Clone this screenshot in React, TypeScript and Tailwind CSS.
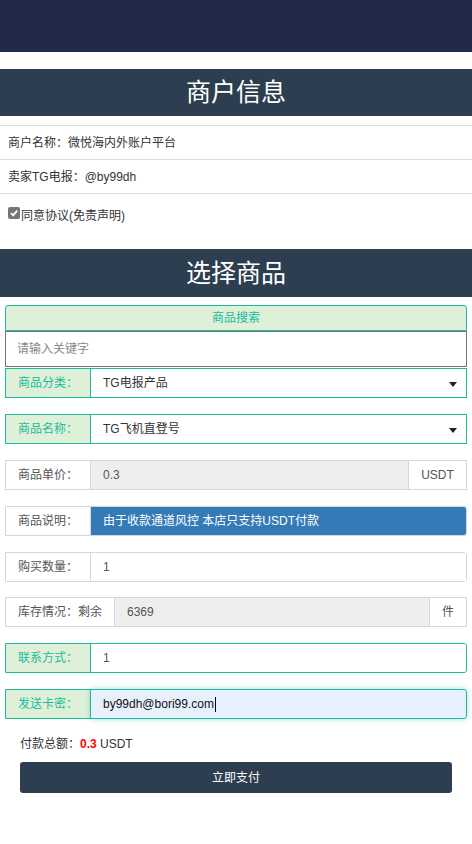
import React from "react";

const font = { fontFamily: '"Liberation Sans", "Noto Sans CJK SC", sans-serif' };

function Caret() {
  return (
    <svg width="8" height="5" viewBox="0 0 8 5" className="absolute right-[9px] top-[13px]">
      <path d="M0 0 L8 0 L4 5 Z" fill="#222" />
    </svg>
  );
}

export default function App() {
  return (
    <div className="w-[472px] min-h-[844px] bg-white text-[12px] text-[#333]" style={font}>
      <div className="h-[52px] bg-[#212a4a]" />
      <div className="mt-[17px] h-[47px] bg-[#2c3e50] flex items-center justify-center text-white text-[25px] leading-none">
        商户信息
      </div>
      <div className="mt-[9px]">
        <div className="h-[34px] border-t border-[#ddd] flex items-center px-[8px]">商户名称：微悦海内外账户平台</div>
        <div className="h-[34px] border-t border-[#ddd] flex items-center px-[8px]">卖家TG电报：@by99dh</div>
        <div className="h-[56px] border-t border-[#ddd] flex items-start pt-[13px] px-[8px]">
          <span className="inline-flex items-center justify-center w-[12px] h-[12px] rounded-[2px] bg-[#767676] mr-[1px]">
            <svg width="10" height="10" viewBox="0 0 10 10">
              <path d="M2 5.2 L4.2 7.4 L8.2 2.6" stroke="white" strokeWidth="1.8" fill="none" />
            </svg>
          </span>
          同意协议(免责声明)
        </div>
      </div>
      <div className="h-[48px] bg-[#2c3e50] flex items-center justify-center text-white text-[25px] leading-none">
        选择商品
      </div>
      <div className="px-[5px] pt-[8px]">
        <div className="h-[26px] border border-[#1abc9c] rounded-t-[3px] bg-[#dff0d8] text-[#1abc9c] flex items-center justify-center">
          商品搜索
        </div>
        <div className="h-[36px] border border-[#767676] flex items-center px-[11px] text-[#888]">请输入关键字</div>

        <div className="mt-[1px] h-[30px] flex border border-[#1abc9c]">
          <div className="w-[85px] bg-[#dff0d8] text-[#1abc9c] border-r border-[#1abc9c] flex items-center pl-[12px]">商品分类：</div>
          <div className="flex-1 relative flex items-center pl-[12px] text-[#333]">TG电报产品<Caret /></div>
        </div>

        <div className="mt-[16px] h-[30px] flex border border-[#1abc9c]">
          <div className="w-[85px] bg-[#dff0d8] text-[#1abc9c] border-r border-[#1abc9c] flex items-center pl-[12px]">商品名称：</div>
          <div className="flex-1 relative flex items-center pl-[12px] text-[#333]">TG飞机直登号<Caret /></div>
        </div>

        <div className="mt-[16px] h-[30px] flex border border-[#d2d6de]">
          <div className="w-[85px] bg-white text-[#555] border-r border-[#d2d6de] flex items-center pl-[12px]">商品单价：</div>
          <div className="flex-1 bg-[#eee] flex items-center pl-[12px] text-[#555]">0.3</div>
          <div className="w-[58px] border-l border-[#d2d6de] flex items-center justify-center text-[#555]">USDT</div>
        </div>

        <div className="mt-[16px] h-[30px] flex border border-[#d2d6de] rounded-r-[3px]">
          <div className="w-[85px] bg-white text-[#555] border-r border-[#d2d6de] flex items-center pl-[12px]">商品说明：</div>
          <div className="flex-1 bg-[#337ab7] flex items-center pl-[12px] text-white rounded-r-[2px]">由于收款通道风控 本店只支持USDT付款</div>
        </div>

        <div className="mt-[16px] h-[30px] flex border border-[#d2d6de] rounded-r-[3px]">
          <div className="w-[85px] bg-white text-[#555] border-r border-[#d2d6de] flex items-center pl-[12px]">购买数量：</div>
          <div className="flex-1 bg-white flex items-center pl-[12px] text-[#555]">1</div>
        </div>

        <div className="mt-[15px] h-[30px] flex border border-[#d2d6de]">
          <div className="w-[109px] bg-white text-[#555] border-r border-[#d2d6de] flex items-center pl-[12px]">库存情况：剩余</div>
          <div className="flex-1 bg-[#eee] flex items-center pl-[12px] text-[#555]">6369</div>
          <div className="w-[37px] border-l border-[#d2d6de] flex items-center justify-center text-[#555]">件</div>
        </div>

        <div className="mt-[16px] h-[30px] flex border border-[#1abc9c] rounded-r-[3px]">
          <div className="w-[85px] bg-[#dff0d8] text-[#1abc9c] border-r border-[#1abc9c] flex items-center pl-[12px]">联系方式：</div>
          <div className="flex-1 bg-white flex items-center pl-[12px] text-[#555] rounded-r-[3px]">1</div>
        </div>

        <div className="mt-[16px] h-[30px] flex border border-[#1abc9c] rounded-r-[3px]">
          <div className="w-[85px] bg-[#dff0d8] text-[#1abc9c] border-r border-[#1abc9c] flex items-center pl-[12px]">发送卡密：</div>
          <div className="flex-1 bg-[#e8f0fe] flex items-center pl-[12px] text-[#111] rounded-r-[3px] shadow-[0_0_6px_rgba(26,188,156,0.6)]">
            by99dh@bori99.com<span className="inline-block w-[1px] h-[15px] bg-black ml-[1px]" />
          </div>
        </div>

        <div className="px-[15px] mt-[18px] text-[#333] leading-[14px]">
          付款总额：<span className="text-[#ff0000] font-bold">0.3</span> USDT
        </div>
        <div className="mx-[15px] mt-[11px] h-[31px] rounded-[3px] bg-[#2c3e50] text-white flex items-center justify-center">
          立即支付
        </div>
      </div>
    </div>
  );
}
